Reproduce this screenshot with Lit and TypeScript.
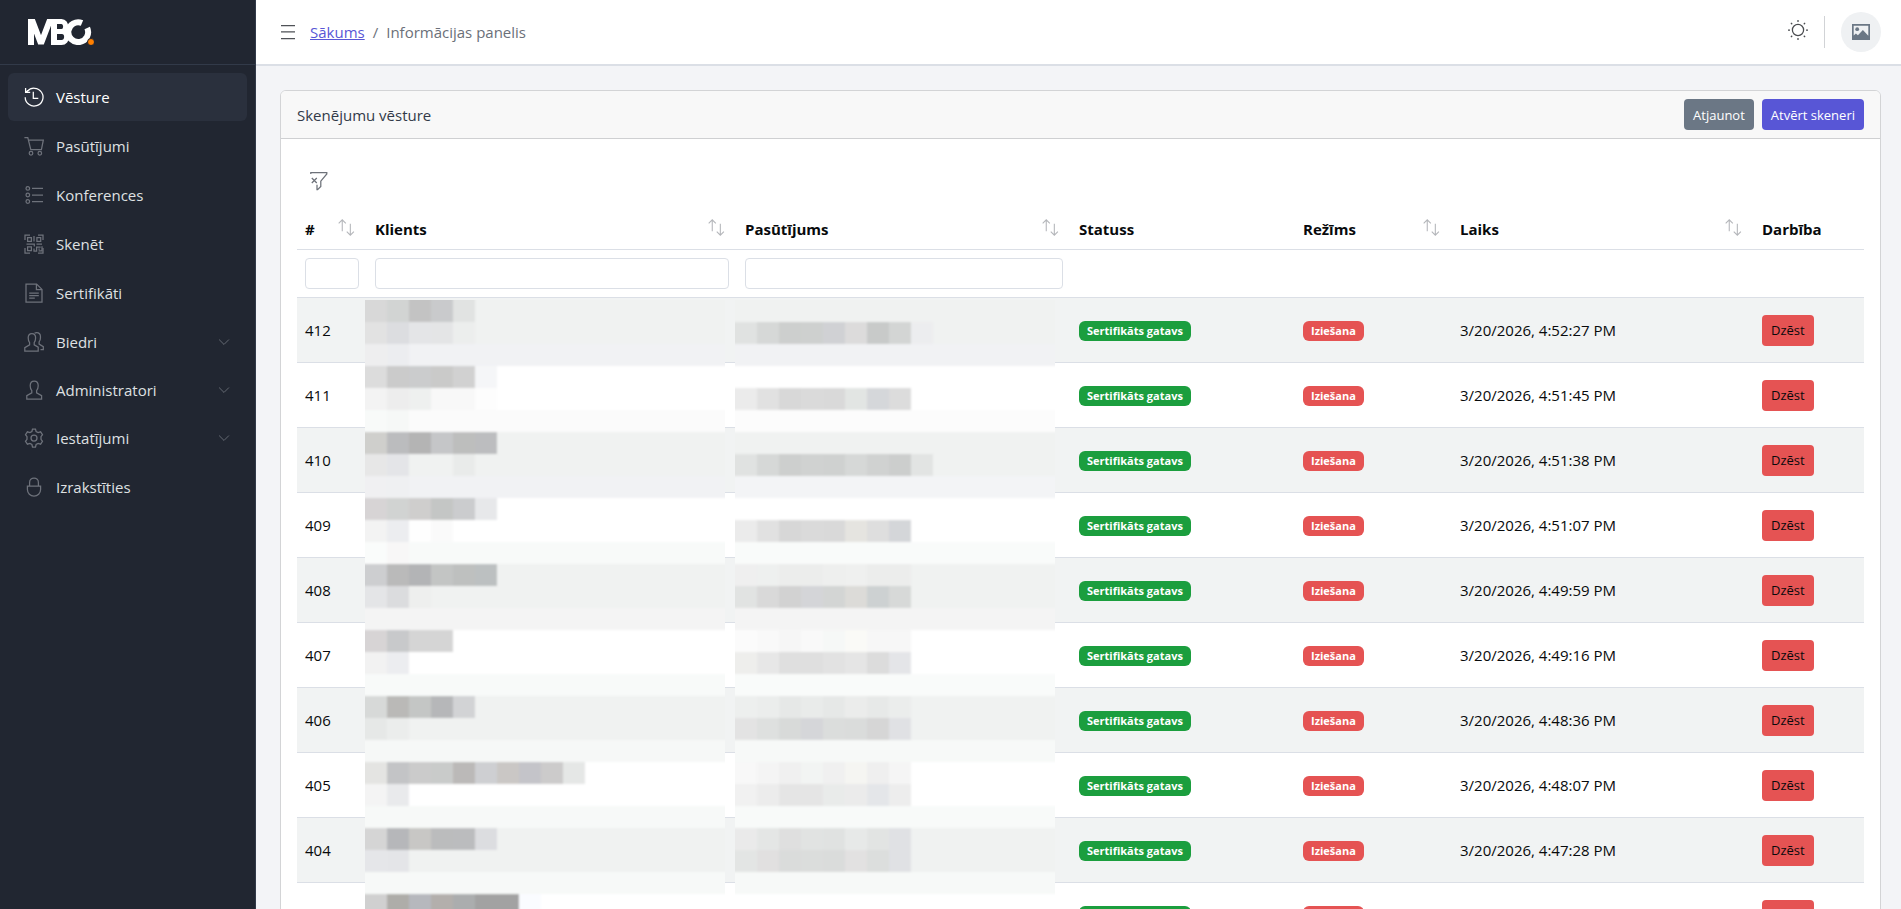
import { LitElement, html, svg, css, nothing } from "lit";
import { customElement, property } from "lit/decorators.js";

const ICONS: Record<string, unknown> = {
  history: svg`<path d="M1.2 10.2a8.9 8.9 0 1 0 2.1-5.8"/><path d="M1.6 1v4.3h4.6M1.6 5.3L4 3.6"/><path d="M9.3 4.8v6.6h5"/>`,
  cart: svg`<path d="M.4 1.6h3.4l3 12h10.6l1.9-9.4H4.5"/><circle cx="7" cy="17.2" r="1.8"/><circle cx="15.8" cy="17.2" r="1.8"/>`,
  list: svg`<circle cx="3.8" cy="3.4" r="1.8"/><circle cx="3.8" cy="10" r="1.8"/><circle cx="3.8" cy="16.5" r="1.8"/><path d="M8 3.4h11M8 10h11M8 16.5h11"/>`,
  qr: svg`<path d="M1 6V1h5M14 1h5v5M19 14v5h-5M6 19H1v-5"/><path d="M3.6 3.6h3.8v3.8H3.6zM12.9 3.6h3.8v3.8h-3.8zM3.6 12.9h3.8v3.8H3.6z"/><path d="M10 2v5.6M2.5 10h7.8v2.5M12.5 10h5.5M10 14.6V17h2.6v-3.8h4M18 12.2v4.6h-3.4M14.4 15.2h1.4"/>`,
  document: svg`<path d="M2 1h10.6L18 6.400V19H2z"/><path d="M12.400 1v5.600H18"/><path d="M5.200 10h9.600M5.200 12.600h9.600M5.200 15.200h5.600"/>`,
  people: svg`<path d="M.8 19v-3.4l4.800-2.800v-2.200c-1-1-1.400-2.400-1.400-4.800 0-2.600 1.400-4.200 3.700-4.200s3.700 1.600 3.700 4.200c0 2.400-.4 3.800-1.400 4.800v2.200l4 2.400V19z"/><path d="M10.600 1.100c.6-.3 1.300-.4 2-.4 2.300 0 3.900 1.600 3.900 4.200 0 2.400-.4 4-1.400 5v2.200l4.200 2.500v3h-2.800"/>`,
  user: svg`<path d="M2.800 19v-3.400l5-2.800v-2.200c-1-1-1.600-2.400-1.600-4.800 0-2.800 1.600-4.600 4-4.600s4 1.800 4 4.600c0 2.400-.6 3.800-1.600 4.800v2.200l5 2.800V19z"/>`,
  settings: svg`<circle cx="10" cy="10" r="3"/><path d="M7.900 3.500l.6-2.500h3l.6 2.500 2 1.100 2.500-.8 1.900 2.900-1.500 1.900v2.800l1.500 1.900-1.900 2.900-2.500-.8-2 1.100-.6 2.500h-3l-.6-2.500-2-1.100-2.500.8-1.900-2.900L3 11.400V8.600L1.500 6.700l1.900-2.900 2.500.8z"/>`,
  lock: svg`<path d="M3.400 9h13.200v3.600a6.600 6.600 0 0 1-13.200 0z"/><path d="M5.600 9V5.400a4.400 4.400 0 0 1 8.800 0V9"/>`,
  chevron: svg`<path d="M3 6.500l7 7 7-7"/>`,
  menu: svg`<path d="M3 3.500h14M3 9.800h14M3 16.500h14"/>`,
  sun: svg`<circle cx="10" cy="10" r="5.600"/><path d="M10 0v2M10 18v2M0 10h2M18 10h2M2.900 2.900l1.300 1.300M15.800 15.800l1.300 1.300M2.900 17.100l1.300-1.300M15.800 4.200l1.300-1.300"/>`,
  image: svg`<path class="solid" fill-rule="evenodd" d="M1 2h18v16H1zM2.700 3.700v9.800l2.200-2 2 1.700 5-5.200 5.400 5.800V3.700z"/><circle class="solid" cx="6.200" cy="7.200" r="1.900"/>`,
  filterOff: svg`<path d="M1.800 3V1.500h16V3l-6 7.200v5.200l-3.200 3.200H8V13.800"/><path d="M2.800 7l5 5M7.800 7l-5 5"/>`,
  sort: svg`<path d="M5 14.500V1.500M.8 5.200L5 1l4.200 4.200"/><path d="M14.500 5.500v13M10.300 14.800l4.200 4.200 4.200-4.200"/>`,
};

const icon = (name: string, cls = "") =>
  html`<svg class="icon ${cls}" viewBox="0 0 20 20" aria-hidden="true">${ICONS[name]}</svg>`;

/* One entry per 22px band: the background first, then the tiles from the left. */
const CLIENT_TILES = [
  "f0f2f1 d8d8d8 d2d4d3 c3c3c3 c9cacc e1e3e2",
  "f0f2f1 e2e2e2 dcdde0 e4e5e7 e4e5e6 eceeed",
  "f1f2f4 eeeeef ecedf0",
  "ffffff dcdcdc cbcbcb cbcccd cacac9 d1d1d1 f5f6f8",
  "ffffff f3f3f3 ededed eef0ef f8f8f8 f8f8f8 fdfdfd",
  "fbfbfb f8faf9 f6f8f7",
  "f0f2f1 cfcfcc bbbcbe b4b4b4 c5c6c8 bdbebd bcbdbf",
  "f0f2f1 e7e7e7 e4e5e8 f0f2f1 f0f2f1 e9ebea",
  "f1f2f4 f0f0f2 eff0f2",
  "ffffff d7d4d5 d1d3d2 cfcecd c4c6c5 cbccce e7e8ea",
  "ffffff f3f3f3 ecedf0 fefefe fafafa",
  "f8faf9 fafcfb f8f7f7",
  "f0f2f1 cdced0 bababa b3b4b6 c3c5c4 bec0bf bcc0c1",
  "f0f2f1 e4e5e7 dbdcde eeefee",
  "f4f4f4",
  "ffffff d7d4d5 c8c9cb d5d5d5 d5d5d5",
  "ffffff f2f2f2 ecedf0",
  "f8faf9",
  "f0f2f1 d7d9d8 bab9b7 c4c6c5 b6b7b9 d2d3d5",
  "f0f2f1 e6e8e7 ebedec",
  "f6f8f7",
  "ffffff e4e4e2 c3c4c6 cbcbcb c9cbca bbb9b8 cecfd2 cac7c5 c4c4c9 cccbcb e5e7e6",
  "ffffff f4f4f4 e9eaec",
  "f7f9f8",
  "f0f2f1 d5d5d5 b6b7ba c8c7c5 bbbcbd bbbcbe dcdde0",
  "f0f2f1 e5e6e9 e4e5e8",
  "f7f9f8",
  "ffffff d0d0d0 aeada9 b6b8bd b3afac abadae a2a2a2 a2a2a2 fafcff",
];
const ORDER_TILES = [
  "f0f2f1",
  "f0f2f1 e0e2e1 d6d8d7 cdcfce ced0cf d0d1d4 dcdbdb c8cac9 d3d5d4 ecedef",
  "f1f2f4",
  "ffffff",
  "ffffff ebebeb e1e1e1 d8d8d8 dadada d9d9d9 e2e5e3 d5d7da dcdcdc",
  "fcfcfc",
  "f0f2f1",
  "f0f2f1 e0e2e1 d6d8d7 cdcfce d0d2d1 cfd1d0 d6d8d7 d0d2d1 cccecd e2e4e3",
  "f3f4f6",
  "ffffff",
  "ffffff ebebeb e1e1e1 d7d7d7 dadada d9d9d9 e5e4e0 dedede d4d6d9",
  "f9fbfa",
  "f0f2f1 efefef eef0ef ecedec ecedec eeefee eff0ef ecedec ecedec",
  "f0f2f1 e1e3e2 d9d9d9 d2d2d2 d4d5d8 d3d5d4 dcdbd8 cdd1d2 d7d9d8",
  "f4f4f4",
  "ffffff fbfbfb f9f9f9 f6f6f6 f9f9f9 f6f8f7 fafaf7 f7f7f7 f7f7f7",
  "ffffff eeeeec e7e7e7 dfdfdf dfdfdf e2e2e2 e5e5e5 dcdcdc e4e5e8",
  "f9fbfa",
  "f0f2f1 edefee ebedec e6e8e7 e9ebea e6e8e7 ebeceb e7e9e8 ebedec",
  "f0f2f1 e3e3e3 dee0df d8dad9 d5d6d9 dbdddc dadcdb d6d6d6 e0e1e4",
  "f7f9f8",
  "ffffff f8f8f8 f4f4f4 f0f0f0 f2f4f3 f0f0f0 f5f5f2 efefef f5f5f5",
  "ffffff f1f1f1 ececec e5e5e5 e5e5e5 e9ebea ebebeb e4e6e9 ededed",
  "f8faf9",
  "f0f2f1 eaeaea e4e6e5 dfdfdf e1e3e2 e0e2e1 e7e9e8 e2e4e3 e0e1e4",
  "f0f2f1 e3e5e4 e1e0e0 dadcdb dbdddc dadcdb e2e1e1 dcdedd e0e1e4",
  "f7f9f8",
  "ffffff",
];

@customElement("privacy-mosaic")
class PrivacyMosaic extends LitElement {
  @property({ attribute: false }) bands: string[] = [];
  @property({ type: Number }) width = 360;

  static styles = css`
    :host { display: block; overflow: hidden; }
    svg { display: block; }
  `;

  render() {
    const T = 22;
    const h = this.bands.length * T;
    return html`<svg width=${this.width} height=${h} viewBox="0 0 ${this.width} ${h}" aria-hidden="true">
      <defs>
        <filter id="soft" filterUnits="userSpaceOnUse" x="-10" y="-10" width=${this.width + 20} height=${h + 20}>
          <feGaussianBlur stdDeviation="1"></feGaussianBlur>
        </filter>
      </defs>
      <g filter="url(#soft)" shape-rendering="crispEdges">
        ${this.bands.map((band, row) => {
          const [bg, ...tiles] = band.split(" ");
          const y = row === 0 ? -10 : row * T;
          const bh = row === 0 ? T + 10 : T;
          return svg`<rect x="-10" y=${y} width=${this.width + 20} height=${bh} fill="#${bg}"></rect>
            ${tiles.map((c, i) => svg`<rect x=${i ? i * T : -10} y=${y} width=${i ? T : T + 10} height=${bh} fill="#${c}"></rect>`)}`;
        })}
      </g>
    </svg>`;
  }
}

const NAV = [
  { icon: "history", label: "Vēsture", active: true },
  { icon: "cart", label: "Pasūtījumi" },
  { icon: "list", label: "Konferences" },
  { icon: "qr", label: "Skenēt" },
  { icon: "document", label: "Sertifikāti" },
  { icon: "people", label: "Biedri", group: true },
  { icon: "user", label: "Administratori", group: true },
  { icon: "settings", label: "Iestatījumi", group: true },
  { icon: "lock", label: "Izrakstīties" },
];

const COLUMNS = [
  { key: "id", label: "#", sort: true, filter: true },
  { key: "client", label: "Klients", sort: true, filter: true },
  { key: "order", label: "Pasūtījums", sort: true, filter: true },
  { key: "status", label: "Statuss" },
  { key: "mode", label: "Režīms", sort: true },
  { key: "time", label: "Laiks", sort: true },
  { key: "action", label: "Darbība" },
];

const SCANS = [
  [412, "4:52:27"], [411, "4:51:45"], [410, "4:51:38"], [409, "4:51:07"], [408, "4:49:59"],
  [407, "4:49:16"], [406, "4:48:36"], [405, "4:48:07"], [404, "4:47:28"], [403, "4:46:52"],
];

@customElement("app-root")
class AppRoot extends LitElement {
  static styles = css`
    :host {
      display: flex;
      height: 100vh;
      overflow: hidden;
      background: #f3f4f7;
      color: #080a0c;
      font: 15px/24px "Open Sans", "Noto Sans", sans-serif;
    }
    * { box-sizing: border-box; }
    button, input { font: inherit; color: inherit; margin: 0; }
    .icon {
      width: 20px; height: 20px; flex: none; display: block;
      fill: none; stroke: currentColor; stroke-width: 1.25;
    }
    .icon .solid { fill: currentColor; stroke: none; }

    .sidebar {
      flex: none; width: 256px;
      background: #212631; color: #dfe0e2;
      border-right: 1px solid #323a49;
    }
    .brand {
      display: flex; align-items: center;
      height: 65px; padding: 0 28px; border-bottom: 1px solid #323a49;
    }
    .brand svg { display: block; width: 66px; height: 26px; }
    .nav { list-style: none; margin: 0; padding: 8px; }
    .entry + .entry { margin-top: 1px; }
    .group + .group { margin-top: 0; }
    .link {
      display: flex; align-items: center; gap: 12px; width: 100%; height: 48px;
      padding: 0 16px; border: 0; border-radius: 6px; background: none;
      color: inherit; text-decoration: none; text-align: left; cursor: pointer;
    }
    .link .icon { color: #6e727b; }
    .link .chev { width: 14px; height: 14px; margin: 0 0 0 auto; }
    .link.active { background: #2a303d; color: #fff; }
    .link.active .icon { color: #fff; }

    .page { flex: 1; min-width: 0; display: flex; flex-direction: column; }
    .topbar {
      flex: none; display: flex; align-items: center;
      height: 66px; padding: 0 20px 0 22px;
      background: #fff; border-bottom: 2px solid #dbdfe6;
    }
    .plain { display: flex; padding: 0; border: 0; background: none; cursor: pointer; }
    .toggle { color: #4f5257; }
    .crumbs {
      display: flex; gap: 8px; list-style: none; margin: 0 auto 0 0; padding: 0 0 0 12px;
      color: #6b7079;
    }
    .crumbs a { color: #5856d6; text-decoration: underline; }
    .theme { padding: 0 16px 4px 0; color: #4a4c50; }
    .rule { width: 1px; height: 32px; background: #d1d3d6; margin-right: 16px; }
    .avatar {
      display: flex; align-items: center; justify-content: center;
      width: 40px; height: 40px; border-radius: 50%; border: 0; padding: 0;
      background: #eff1f3; color: #6b7785; cursor: pointer;
    }

    .content {
      flex: 1; min-height: 0; padding: 24px 20px 24px 24px;
      overflow-y: auto; scrollbar-width: none;
    }
    .card { background: #fff; border: 1px solid #d3d4d6; border-radius: 6px; }
    .card-head {
      display: flex; align-items: center; gap: 8px; padding: 8px 16px;
      border-bottom: 1px solid #cfd0d2; border-radius: 5px 5px 0 0;
      background: #f8f8f8; color: #323a49;
    }
    .title { margin: 0 auto 0 0; font-size: inherit; font-weight: 400; }
    .btn {
      display: inline-block; height: 31px; padding: 0 8px; border: 1px solid transparent;
      border-radius: 4px; font-size: 13px; line-height: 24px; color: #fff; cursor: pointer;
    }
    .secondary { background: #6b7785; }
    .primary { background: #5856d6; }
    .danger { background: #e55353; color: #080a0c; }
    .card-body { padding: 16px; }
    .tools { padding: 16px 12px 13px; color: #6d7179; }

    table { width: 100%; border-collapse: separate; border-spacing: 0; table-layout: fixed; }
    .c-id { width: 70px; }
    .c-client { width: 370px; }
    .c-order { width: 334px; }
    .c-status { width: 224px; }
    .c-mode { width: 157px; }
    .c-time { width: 302px; }
    .c-action { width: 110px; }
    th, td { padding: 8px; text-align: left; border-bottom: 1px solid #dbdfe6; }
    th { font-weight: 700; }
    .labels th { height: 46px; padding: 8px 8px 4px; }
    .label { display: flex; align-items: center; justify-content: space-between; }
    .sort { padding: 0 4px 2px 0; color: #b4b6ba; }
    .sort .icon { width: 17px; height: 17px; }
    .filters th { height: 48px; }
    .filters input {
      display: block; width: 100%; height: 31px; padding: 0 8px;
      border: 1px solid #dbdfe6; border-radius: 4px; background: #fff; font-weight: 400;
    }
    tbody td { height: 65px; }
    tbody tr:nth-child(odd) td { background: #f1f3f3; }
    .badge {
      display: block; width: fit-content; height: 20px; padding: 0 8px; border-radius: 6px;
      margin-top: 2px;
      font-size: 11px; line-height: 20px; font-weight: 700; color: #fff;
    }
    .ready { background: #1b9e3e; }
    .exit { background: #e55353; }
    .covered { position: relative; }
    privacy-mosaic { position: absolute; z-index: 1; top: 2px; left: -2px; }
  `;

  render() {
    return html`
      <aside class="sidebar">
        <div class="brand">
          <svg viewBox="0 0 66 26" role="img" aria-label="MBC">
            <g fill="none" stroke="#fff">
              <path stroke-width="6" stroke-linejoin="bevel" d="M3 30V-4M2.500-3L13 24.500 23.500-3M26 30V-4"/>
              <path stroke-width="5" d="M26 2.500h7.500c5.500 0 5.500 10 0 10H26h8c6.500.2 6 11-.5 11H26"/>
              <path stroke-width="6" d="M54 4A9.900 9.900 0 1 0 59.200 9"/>
            </g>
            <circle cx="63" cy="23" r="3.500" fill="#ff7f00" stroke="#212631"/>
          </svg>
        </div>
        <nav aria-label="Sānjosla">
          <ul class="nav">
            ${NAV.map((n) => html`<li class="entry ${n.group ? "group" : ""}">
              ${n.group
                ? html`<button class="link" type="button" aria-expanded="false">${icon(n.icon)}${n.label}${icon("chevron", "chev")}</button>`
                : html`<a class="link ${n.active ? "active" : ""}" href="#">${icon(n.icon)}${n.label}</a>`}
            </li>`)}
          </ul>
        </nav>
      </aside>
      <div class="page">
        <header class="topbar">
          <button class="plain toggle" type="button" aria-label="Izvēlne">${icon("menu")}</button>
          <ol class="crumbs">
            <li><a href="#">Sākums</a></li>
            <li>/</li>
            <li>Informācijas panelis</li>
          </ol>
          <button class="plain theme" type="button" aria-label="Motīvs">${icon("sun")}</button>
          <span class="rule"></span>
          <button class="avatar" type="button" aria-label="Profils">${icon("image")}</button>
        </header>
        <main class="content">
          <section class="card">
            <div class="card-head">
              <h1 class="title">Skenējumu vēsture</h1>
              <button class="btn secondary" type="button">Atjaunot</button>
              <button class="btn primary" type="button">Atvērt skeneri</button>
            </div>
            <div class="card-body">
              <div class="tools">
                <button class="plain" type="button" aria-label="Notīrīt filtrus">${icon("filterOff")}</button>
              </div>
              <table>
                <colgroup>${COLUMNS.map((c) => html`<col class="c-${c.key}">`)}</colgroup>
                <thead>
                  <tr class="labels">
                    ${COLUMNS.map((c) => html`<th scope="col"><span class="label">${c.label}
                      ${c.sort ? html`<button class="plain sort" type="button" aria-label="Kārtot: ${c.label}">${icon("sort")}</button>` : nothing}
                    </span></th>`)}
                  </tr>
                  <tr class="filters">
                    ${COLUMNS.map((c) => html`<th>${c.filter ? html`<input type="text" aria-label=${c.label}>` : nothing}</th>`)}
                  </tr>
                </thead>
                <tbody>
                  ${SCANS.map(([id, time], i) => html`<tr>
                    <td>${id}</td>
                    <td class=${i ? "" : "covered"}>${i ? nothing : html`<privacy-mosaic .bands=${CLIENT_TILES} .width=${360}></privacy-mosaic>`}</td>
                    <td class=${i ? "" : "covered"}>${i ? nothing : html`<privacy-mosaic .bands=${ORDER_TILES} .width=${320}></privacy-mosaic>`}</td>
                    <td><span class="badge ready">Sertifikāts gatavs</span></td>
                    <td><span class="badge exit">Iziešana</span></td>
                    <td>3/20/2026, ${time} PM</td>
                    <td><button class="btn danger" type="button">Dzēst</button></td>
                  </tr>`)}
                </tbody>
              </table>
            </div>
          </section>
        </main>
      </div>
    `;
  }
}
